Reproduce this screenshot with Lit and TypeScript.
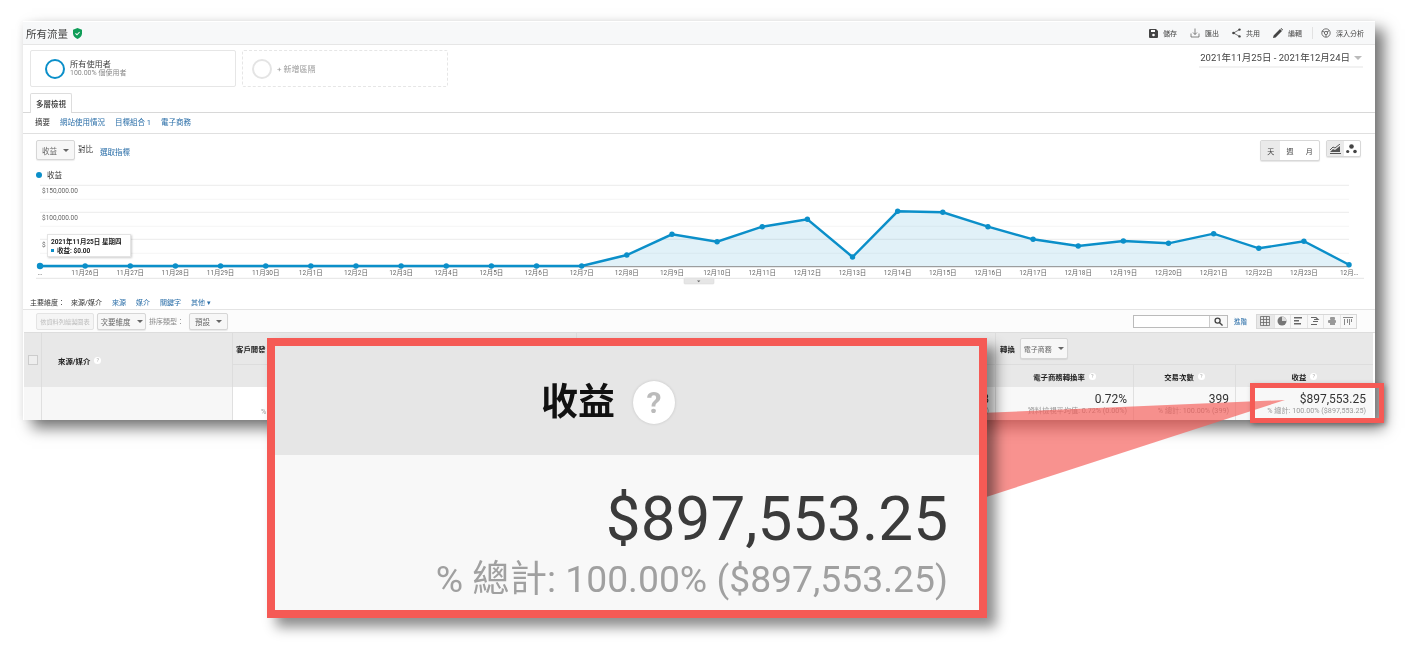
import { LitElement, html, css, svg } from "lit";
import { customElement } from "lit/decorators.js";

const X0 = 40, STEP = 45.14;
const YS = [266,266,266,266,266,266,266,266,266,266,266,266,266,255,234.3,241.7,226.7,219.3,257,211.3,212.3,226.7,239.3,246,241,243.3,233.7,248.3,241.3,264.7];
const LABELS = ["…","11月26日","11月27日","11月28日","11月29日","11月30日","12月1日","12月2日","12月3日","12月4日","12月5日","12月6日","12月7日","12月8日","12月9日","12月10日","12月11日","12月12日","12月13日","12月14日","12月15日","12月16日","12月17日","12月18日","12月19日","12月20日","12月21日","12月22日","12月23日","12月…"];
const pts = YS.map((y, i) => [X0 + i * STEP, y] as const);
const line = pts.map((p) => p.join(",")).join(" ");
const area = `${X0},266.5 ${line} ${X0 + 29 * STEP},266.5`;

const chart = html`<svg class="chart" width="1352" height="104" viewBox="23 181 1352 104">
  ${[185.3, 212.3, 239.3].map((y) => svg`<line x1="40" x2="1349" y1=${y} y2=${y} stroke="#ececec"/>`)}
  ${[199.3, 226.3, 253.3].map((y) => svg`<line x1="40" x2="1349" y1=${y} y2=${y} stroke="#f6f6f6"/>`)}
  <text class="ax" x="42" y="192.5">$150,000.00</text>
  <text class="ax" x="42" y="219.5">$100,000.00</text>
  <text class="ax" x="42" y="246.5">$</text>
  <polygon points=${area} fill="#0b8fc9" fill-opacity=".12"/>
  <line x1="40" x2="1349" y1="266.7" y2="266.7" stroke="#888"/>
  <polyline points=${line} fill="none" stroke="#0b8fc9" stroke-width="2.4"/>
  ${pts.map((p, i) => svg`<circle cx=${p[0]} cy=${p[1]} r=${i === 0 ? 3.2 : 2.7} fill="#0b8fc9"/>`)}
  ${pts.map((p, i) => svg`<text class="xl" x=${p[0]} y="274.5" text-anchor="middle">${LABELS[i]}</text>`)}
  <line x1="36" x2="1364" y1="278.3" y2="278.3" stroke="#e4e4e4"/>
  <rect x="684" y="278" width="30" height="6" rx="1" fill="#e6e6e6" stroke="#d6d6d6" stroke-width=".5"/>
  <path d="M697 280.5h3.4l-1.7 1.8z" fill="#666"/>
</svg>`;

const I = {
  save: html`<svg width="9" height="9" viewBox="0 0 9 9"><path d="M0 1a1 1 0 0 1 1-1h6l2 2v6a1 1 0 0 1-1 1H1a1 1 0 0 1-1-1z" fill="#444"/><rect x="2" y="1" width="4" height="2" fill="#fff"/><circle cx="4.5" cy="6" r="1.3" fill="#fff"/></svg>`,
  dl: html`<svg width="10" height="10" viewBox="0 0 10 10" fill="none" stroke="#666" stroke-width=".8"><path d="M1 5.5V9h8V5.500M5 .5v6M3 4.500l2 2 2-2"/></svg>`,
  share: html`<svg width="9" height="10" viewBox="0 0 9 10" fill="#444"><circle cx="1.500" cy="5" r="1.300"/><circle cx="7.500" cy="1.600" r="1.200"/><circle cx="7.500" cy="8.400" r="1.200"/><path d="M1.500 5L7.500 1.600M1.500 5L7.500 8.400" stroke="#444" stroke-width=".7"/></svg>`,
  pen: html`<svg width="10" height="10" viewBox="0 0 10 10" fill="#444"><path d="M0 10l.6-2.600L7 1l2 2-6.400 6.400zM7.600.4l.6-.4 1.800 1.800-.4.6z"/></svg>`,
  insight: html`<svg width="10" height="10" viewBox="0 0 11 11" fill="none" stroke="#555" stroke-width=".9"><circle cx="5.500" cy="5.500" r="4.600"/><circle cx="5.500" cy="5.500" r="1.800"/><path d="M1 3.500l3 1M9 3l-2.500 1.500M5.500 10V7.500"/></svg>`,
  search: html`<svg width="9" height="9" viewBox="0 0 10 10" fill="none" stroke="#444" stroke-width="1.500"><circle cx="4" cy="4" r="2.800"/><path d="M6 6l3.500 3.500"/></svg>`,
  shield: html`<svg width="9" height="11" viewBox="0 0 9 11"><path d="M4.500 0L9 1.700v3.500C9 8 7 10 4.500 11 2 10 0 8 0 5.200V1.700z" fill="#0f9d58"/><path d="M2.500 5.300l1.500 1.500 2.600-2.800" fill="none" stroke="#fff" stroke-width="1.100"/></svg>`,
  area: html`<svg width="11" height="10" viewBox="0 0 11 10"><path d="M0 8l3-3 2 1 5-4v6z" fill="#555"/><path d="M0 6l3-3 2 1 5-4" fill="none" stroke="#555"/><path d="M0 9.500h11" stroke="#555"/></svg>`,
  dots: html`<svg width="11" height="10" viewBox="0 0 11 10" fill="#444"><circle cx="5.500" cy="2.500" r="2.300"/><circle cx="1.700" cy="7.500" r="1.600"/><circle cx="9" cy="7.500" r="1.800"/></svg>`,
};
const views = [
  html`<svg width="10" height="10" viewBox="0 0 10 10" fill="none" stroke="#666" stroke-width=".8"><path d="M.5.500h9v9h-9zM.5 3.500h9M.5 6.500h9M3.500.5v9M6.500.5v9"/></svg>`,
  html`<svg width="10" height="10" viewBox="0 0 10 10"><circle cx="5" cy="5" r="4.500" fill="#777"/><path d="M5 .5A4.500 4.500 0 0 1 9.500 5H5z" fill="#ddd"/></svg>`,
  html`<svg width="10" height="10" viewBox="0 0 10 10" fill="#666"><rect y="1" width="8" height="1.500"/><rect y="4" width="5" height="1.500"/><rect y="7" width="7" height="1.500"/></svg>`,
  html`<svg width="10" height="10" viewBox="0 0 10 10" fill="none" stroke="#666" stroke-width="1.200"><path d="M1 1.500h5l2 2H4M3 5.500h5M1 8.500h6"/></svg>`,
  html`<svg width="10" height="10" viewBox="0 0 10 10" fill="#999"><rect x="3" y="1" width="5" height="3" rx="1"/><rect x="1" y="4" width="8" height="3" rx="1"/><rect x="3" y="7" width="5" height="2"/></svg>`,
  html`<svg width="10" height="10" viewBox="0 0 10 10" fill="#888"><path d="M0 1h10v1H0zM1 3h1v6H1zM4 3h1v4H4zM6 3h1v6H6zM8 3h1v3H8z"/></svg>`,
];

@customElement("app-root")
export class AppRoot extends LitElement {
  static styles = css`
    :host { display: block; position: relative; height: 662px; background: #fff; overflow: hidden;
      font-family: Roboto, "Noto Sans CJK TC", sans-serif; color: #333; }
    .shell { position: absolute; left: 23px; top: 21px; width: 1352px; height: 399px;
      box-shadow: 9px 8px 14px rgba(0,0,0,.55), -2px 0 6px rgba(0,0,0,.04); }
    .card { width: 100%; height: 100%; overflow: hidden; background: #fff; filter: blur(.4px); display: flex; flex-direction: column; }
    a { color: #2a6ea8; text-decoration: none; }
    .top { height: 22px; margin-top: 1px; background: #f7f8f9; border-bottom: 1px solid #e6e6e6; display: flex; align-items: center; padding: 0 11px 0 3px; flex: none; }
    .title { font-size: 10.500px; color: #444; margin-right: 5px; }
    .grow { flex: 1; }
    .act { display: flex; align-items: center; gap: 5px; font-size: 7px; color: #444; margin-left: 13px; }
    .sep { width: 1px; height: 12px; background: #e2e2e2; margin-left: 10px; margin-right: -5px; }
    .segs { height: 37px; margin-top: 5px; padding-left: 7px; display: flex; gap: 6px; position: relative; flex: none; }
    .seg { width: 206px; box-sizing: border-box; border: 1px solid #e6e6e6; border-radius: 2px; display: flex; align-items: center; }
    .seg.add { border-style: dashed; color: #999; font-size: 8px; padding-left: 9px; gap: 5px; }
    .seg.first { padding-left: 14px; gap: 5px; }
    .ring { width: 20px; height: 20px; box-sizing: border-box; border-radius: 50%; border: 2.500px solid #0b8fc9; flex: none; }
    .add .ring { border-color: #e4e4e4; }
    .n1 { font-size: 8.200px; line-height: 9px; color: #444; }
    .n2 { font-size: 7px; line-height: 8px; color: #888; }
    .date { position: absolute; right: 12px; top: 0; font-size: 9.500px; color: #444; line-height: 13px; padding: 1px 1px 2px 1px; border-bottom: 2px solid #f2f2f2; display: flex; align-items: center; gap: 4px; }
    .tri { width: 0; height: 0; border: 3px solid transparent; border-top: 3.500px solid #666; border-bottom: 0; }
    .date .tri { border-top-color: #bbb; border-width: 4px 4px 0; }
    .tabs { height: 19px; margin-top: 6px; padding-left: 7px; border-bottom: 1px solid #d8d8d8; flex: none; display: flex; }
    .tab { width: 42px; box-sizing: border-box; border: 1px solid #ddd; border-bottom: 0; border-radius: 2px 2px 0 0; background: #fff; font-size: 7.500px; font-weight: 500; display: flex; align-items: center; justify-content: center; height: 20px; }
    .sub { height: 21px; border-bottom: 1px solid #e0e0e0; display: flex; align-items: center; gap: 10px; padding: 0 0 3px 12px; box-sizing: border-box; font-size: 7.500px; flex: none; }
    .ctl { height: 34px; flex: none; position: relative; display: flex; padding: 6px 14px 0 13px; font-size: 7.500px; box-sizing: border-box; }
    .dd { box-sizing: border-box; border: 1px solid #d6d6d6; border-radius: 2px; background: #f7f7f7; box-shadow: 0 1px 1px rgba(0,0,0,.08); display: flex; align-items: center; justify-content: center; gap: 6px; color: #666; font-size: 7.500px; flex: none; }
    .metric { width: 39px; height: 20px; }
    .cmp { margin: 3px 0 0 3px; }
    .pick { margin: 6px 0 0 7px; }
    .btns { display: flex; border: 1px solid #d8d8d8; border-radius: 2px; height: 21px; box-sizing: border-box; box-shadow: 0 1px 1px rgba(0,0,0,.1); background: #fff; }
    .btns span { width: 19.300px; display: flex; align-items: center; justify-content: center; font-size: 7px; color: #444; }
    .btns .on { background: #eaeaea; }
    .btns.small { height: 17px; margin-left: 6px; }
    .btns.small span { width: 16.500px; }
    .legend { height: 13px; flex: none; display: flex; align-items: center; gap: 5px; padding-left: 13px; font-size: 7.500px; margin-top: 0; }
    .dot { width: 6px; height: 6px; border-radius: 50%; background: #0b8fc9; }
    .chartbox { position: relative; height: 104px; flex: none; }
    .chart { display: block; }
    .ax { font-size: 6.500px; fill: #666; }
    .xl { font-size: 6.500px; fill: #666; }
    .tip { position: absolute; left: 24px; top: 53px; width: 84px; height: 23px; box-sizing: border-box; background: #fff; border: 1px solid #e4e4e4; box-shadow: 1px 1px 2px rgba(0,0,0,.2); font-size: 6.500px; font-weight: 700; line-height: 8.500px; padding: 3px 0 0 3px; color: #222; white-space: nowrap; }
    .tip i { display: inline-block; width: 3px; height: 3px; background: #0b8fc9; margin-right: 3px; vertical-align: 1px; }
    .dims { height: 25px; flex: none; box-sizing: border-box; border-bottom: 1px solid #e4e4e4; display: flex; align-items: flex-end; gap: 10px; padding: 0 0 2px 7px; font-size: 7px; }
    .dims .dl { margin-right: -4px; }
    .bar { height: 22px; flex: none; display: flex; align-items: center; padding: 0 18px 0 13px; font-size: 7.500px; background: #fcfcfc; box-sizing: border-box; }
    .bar .dd { height: 17px; }
    .off { width: 58px; height: 17px; box-sizing: border-box; border: 1px solid #e4e4e4; border-radius: 2px; background: #f5f5f5; color: #bbb; font-size: 6.200px; display: flex; align-items: center; justify-content: center; white-space: nowrap; overflow: hidden; }
    .lbl { color: #888; margin: 0 5px 0 3px; font-size: 7px; white-space: nowrap; }
    .search { width: 95px; height: 13px; box-sizing: border-box; border: 1px solid #bbb; display: flex; justify-content: flex-end; background: #fff; }
    .search span { width: 17px; border-left: 1px solid #ccc; display: flex; align-items: center; justify-content: center; background: #f8f8f8; }
    .adv { margin: 0 9px 0 6px; font-size: 6.500px; }
    .views { display: flex; border: 1px solid #d8d8d8; height: 15px; box-sizing: border-box; background: #f8f8f8; }
    .views span { width: 16.500px; box-sizing: border-box; display: flex; align-items: center; justify-content: center; border-left: 1px solid #e4e4e4; }
    .views span:first-child { background: #e8e8e8; border-left: 0; }
    .t { margin-left: 1px; display: grid; grid-template-columns: 17px 191px 344px 419px 138px 102px 138px; grid-template-rows: 31px 23px 33px; border-top: 1px solid #ddd; flex: none; }
    .h { background: #e8e8e8; box-sizing: border-box; border-left: 1px solid #ddd; display: flex; align-items: center; font-size: 7.400px; font-weight: 700; color: #222; }
    .chk { grid-row: span 2; border-left: 0; justify-content: center; }
    .chk i { width: 8px; height: 8px; border: 1px solid #ccc; display: block; background: #eee; }
    .src { grid-row: span 2; padding-left: 16px; gap: 4px; }
    .pad { padding-left: 3px; }
    .conv { grid-column: span 3; padding-left: 4px; gap: 5px; }
    .h.sh { border-top: 1px solid #ddd; justify-content: center; gap: 4px; }
    .q { width: 7px; height: 7px; border-radius: 50%; background: #fff; color: #aaa; font-size: 5.500px; font-weight: 400; display: inline-flex; align-items: center; justify-content: center; }
    .conv .dd { width: 48px; height: 21px; color: #666; font-weight: 400; font-size: 7px; }
    .c { box-sizing: border-box; border-left: 1px solid #e0e0e0; background: #f8f8f8; text-align: right; padding: 6px 6px 0 0; overflow: hidden; white-space: nowrap; }
    .c.w { background: #fff; }
    .c.lead { border-left: 0; background: #f7f7f7; padding: 0; }
    .c.lead.line { border-left: 1px solid #e0e0e0; }
    .c.last { padding-right: 7px; }
    .v { font-size: 12px; line-height: 12px; color: #333; }
    .s { font-size: 7.200px; line-height: 11px; color: #999; }
    .c.left { text-align: left; padding: 19px 0 0 28px; }
    .wedge { position: absolute; left: 0; top: 0; }
    .mark { position: absolute; left: 1250px; top: 383px; width: 134px; height: 40px; box-sizing: border-box; border: 5px solid #f55a55; box-shadow: 2px 2px 5px rgba(0,0,0,.3); }
    .call { position: absolute; left: 267px; top: 338px; width: 720px; height: 280px; box-sizing: border-box; border: 8px solid #f55a55; background: #f8f8f8; display: flex; flex-direction: column; box-shadow: 9px 9px 12px rgba(0,0,0,.45); }
    .ch { height: 109px; flex: none; background: #e6e6e6; display: flex; align-items: center; padding: 4px 0 0 266px; box-sizing: border-box; gap: 18px; filter: blur(.5px); }
    .ch b { font-size: 37px; line-height: 40px; color: #111; font-weight: 700; }
    .ch span { width: 42px; height: 43px; border-radius: 50%; background: #fff; color: #bbb; font-size: 30px; font-weight: 700; display: flex; align-items: center; justify-content: center; box-shadow: 0 0 3px rgba(0,0,0,.15); }
    .cb { flex: 1; text-align: right; padding: 26px 31px 0 0; white-space: nowrap; filter: blur(.5px); }
    .cv { font-size: 62px; line-height: 76px; color: #3b3b3b; }
    .cs { font-size: 37.300px; line-height: 44px; color: #a0a0a0; }
  `;

  render() {
    return html`
      <div class="shell"><div class="card">
        <div class="top">
          <span class="title">所有流量</span>${I.shield}<span class="grow"></span>
          <span class="act">${I.save}儲存</span><span class="act">${I.dl}匯出</span>
          <span class="act">${I.share}共用</span><span class="act">${I.pen}編輯</span>
          <span class="sep"></span><span class="act">${I.insight}深入分析</span>
        </div>
        <div class="segs">
          <div class="seg first"><span class="ring"></span><div><div class="n1">所有使用者</div><div class="n2">100.00% 個使用者</div></div></div>
          <div class="seg add"><span class="ring"></span>+ 新增區隔</div>
          <div class="date">2021年11月25日 - 2021年12月24日 <span class="tri"></span></div>
        </div>
        <div class="tabs"><div class="tab">多層檢視</div></div>
        <div class="sub"><span>摘要</span><a>網站使用情況</a><a>目標組合 1</a><a>電子商務</a></div>
        <div class="ctl">
          <div class="dd metric">收益 <span class="tri"></span></div>
          <span class="cmp">對比</span><a class="pick">選取指標</a>
          <span class="grow"></span>
          <div class="btns"><span class="on">天</span><span>週</span><span>月</span></div>
          <div class="btns small"><span class="on">${I.area}</span><span>${I.dots}</span></div>
        </div>
        <div class="legend"><span class="dot"></span>收益</div>
        <div class="chartbox">${chart}
          <div class="tip">2021年11月25日 星期四<br /><i></i>收益: $0.00</div>
        </div>
        <div class="dims">
          <span class="dl">主要維度：</span><span>來源/媒介</span><a>來源</a><a>媒介</a><a>關鍵字</a><a>其他 ▾</a>
        </div>
        <div class="bar">
          <div class="off">依資料列繪製圖表</div>
          <div class="dd" style="width:49px;margin-left:3px">次要維度 <span class="tri"></span></div>
          <span class="lbl">排序類型：</span>
          <div class="dd" style="width:39px">預設 <span class="tri"></span></div>
          <span class="grow"></span>
          <div class="search"><span>${I.search}</span></div>
          <a class="adv">進階</a>
          <div class="views">${views.map((v) => html`<span>${v}</span>`)}</div>
        </div>
        <div class="t">
          <div class="h chk"><i></i></div>
          <div class="h src">來源/媒介 <span class="q">?</span></div>
          <div class="h pad">客戶開發</div>
          <div class="h pad"></div>
          <div class="h conv">轉換 <div class="dd">電子商務 <span class="tri"></span></div></div>
          <div class="h sh"></div>
          <div class="h sh"></div>
          <div class="h sh">電子商務轉換率 <span class="q">?</span></div>
          <div class="h sh">交易次數 <span class="q">?</span></div>
          <div class="h sh">收益 <span class="q">?</span></div>
          <div class="c lead"></div>
          <div class="c lead line"></div>
          <div class="c w left"><div class="s">% 總計</div></div>
          <div class="c w"><div class="v">00:01:38</div><div class="s">(0.00%)</div></div>
          <div class="c"><div class="v">0.72%</div><div class="s">資料檢視平均值: 0.72% (0.00%)</div></div>
          <div class="c"><div class="v">399</div><div class="s">% 總計: 100.00% (399)</div></div>
          <div class="c last"><div class="v">$897,553.25</div><div class="s">% 總計: 100.00% ($897,553.25)</div></div>
        </div>
      </div></div>
      <svg class="wedge" width="1410" height="662"><polygon points="980,413 1285,400 980,499" fill="#f55a55" fill-opacity=".66"/></svg>
      <div class="mark"></div>
      <div class="call">
        <div class="ch"><b>收益</b><span>?</span></div>
        <div class="cb"><div class="cv">$897,553.25</div><div class="cs">% 總計: 100.00% ($897,553.25)</div></div>
      </div>`;
  }
}
